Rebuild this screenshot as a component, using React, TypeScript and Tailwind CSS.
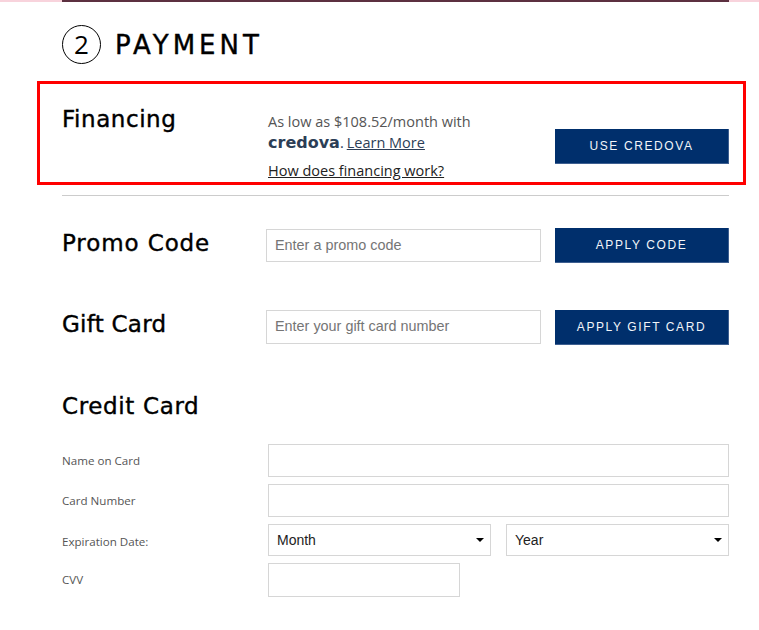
import type { ReactNode } from 'react';

const headingFont = "font-['DejaVu_Sans',sans-serif] [-webkit-text-stroke:0.4px_black]";

function SectionTitle({ children, className }: { children: ReactNode; className: string }) {
    return <h3 className={`w-[204px] shrink-0 text-[23px] leading-[26px] text-black ${headingFont} ${className}`}>{children}</h3>;
}

function NavyButton({ children, className }: { children: ReactNode; className: string }) {
    return (
        <button className={`w-[174px] shrink-0 bg-[#002f6c] text-center text-xs text-[#f2f5f9] tracking-[1.6px] font-['Liberation_Sans',sans-serif] border-r border-b border-[#3e5f90] ${className}`}>
            {children}
        </button>
    );
}

function CardRow({ label, children, className, labelClass = '' }: { label: string; children: ReactNode; className: string; labelClass?: string }) {
    return (
        <div className={`flex items-center ${className}`}>
            <label className={`w-[206px] shrink-0 text-[11.6px] text-[#555] font-['Open_Sans',sans-serif] ${labelClass}`}>{label}</label>
            {children}
        </div>
    );
}

function FakeSelect({ label }: { label: string }) {
    return (
        <div className="flex h-8 w-[223px] items-center justify-between border border-[#d6d6d6] pl-2 pr-[6px] text-sm text-[#222] font-['Liberation_Sans',sans-serif]">
            <span>{label}</span>
            <span className="h-0 w-0 border-x-4 border-t-4 border-x-transparent border-t-black" />
        </div>
    );
}

export default function App() {
    return (
        <div className="h-[630px] w-[759px] overflow-hidden bg-white">
            {/* Top rule */}
            <div className="flex h-0.5">
                <div className="w-[62px] bg-[#f8d3dc]" />
                <div className="flex-1 bg-[#5c3040]" />
                <div className="w-[30px] bg-[#f8d3dc]" />
            </div>

            {/* Payment heading */}
            <div className="ml-[62px] mt-[23px] flex items-center">
                <div className="flex h-[39px] w-[39px] items-center justify-center rounded-full border border-black text-[26px] text-black font-['Open_Sans',sans-serif]">2</div>
                <h2 className={`ml-[14px] h-[39px] text-[26px] leading-[41px] text-black tracking-[4px] ${headingFont}`}>PAYMENT</h2>
            </div>

            {/* Financing */}
            <div className="ml-[37px] mt-[17px] box-border flex h-[104px] w-[709px] border-[3px] border-[#ff0000] pl-[22px] pr-[14px]">
                <div className="mt-[22px]">
                    <SectionTitle className="tracking-[0.55px]">Financing</SectionTitle>
                </div>
                <div className="mt-[28px] w-[289px] shrink-0 pl-[2px] text-[14.5px] text-[#555] font-['Open_Sans',sans-serif]">
                    <p className="leading-[20px]">As low as $108.52/month with</p>
                    <p className="flex items-baseline leading-[22px]">
                        <span className="text-[16px] font-bold text-[#2c3e56] font-['DejaVu_Sans',sans-serif]">credova</span>
                        <span className="text-[#2c3e56]">.</span>
                        <a className="ml-[3px] text-[#2c3e56] underline">Learn More</a>
                    </p>
                    <a className="mt-[7px] block leading-[20px] text-[#222] underline">How does financing work?</a>
                </div>
                <NavyButton className="mt-[45px] h-[35px]">USE CREDOVA</NavyButton>
            </div>

            <div className="ml-[62px] mt-[10px] h-px w-[667px] bg-[#cccccc]" />

            {/* Promo */}
            <div className="ml-[62px] mt-[32px] flex items-start">
                <div className="mt-[2px]"><SectionTitle className="tracking-[0.9px]">Promo Code</SectionTitle></div>
                <input placeholder="Enter a promo code" className="mt-px h-[33px] w-[275px] shrink-0 border border-[#d6d6d6] px-2 pb-[2px] text-[14.4px] text-[#222] placeholder:text-[#757575] font-['Liberation_Sans',sans-serif]" />
                <NavyButton className="ml-[14px] h-[35px]">APPLY CODE</NavyButton>
            </div>

            {/* Gift card */}
            <div className="ml-[62px] mt-[47px] flex items-start">
                <div className="mt-[1px]"><SectionTitle className="tracking-[0.25px]">Gift Card</SectionTitle></div>
                <input placeholder="Enter your gift card number" className="h-[34px] w-[275px] shrink-0 border border-[#d6d6d6] px-2 pb-[2px] text-[14.4px] text-[#222] placeholder:text-[#757575] font-['Liberation_Sans',sans-serif]" />
                <NavyButton className="ml-[14px] h-[35px]">APPLY GIFT CARD</NavyButton>
            </div>

            {/* Credit card */}
            <div className="ml-[62px] mt-[48px]"><SectionTitle className="tracking-[0.64px]">Credit Card</SectionTitle></div>
            <div className="ml-[62px] mt-[25px]">
                <CardRow label="Name on Card" className="h-[33px]">
                    <input className="h-[33px] w-[461px] border border-[#d6d6d6]" />
                </CardRow>
                <CardRow label="Card Number" className="mt-[7px] h-[33px]">
                    <input className="h-[33px] w-[461px] border border-[#d6d6d6]" />
                </CardRow>
                <CardRow label="Expiration Date:" className="mt-[7px] h-8" labelClass="pt-[3px]">
                    <div className="flex gap-[15px]">
                        <FakeSelect label="Month" />
                        <FakeSelect label="Year" />
                    </div>
                </CardRow>
                <CardRow label="CVV" className="mt-[7px] h-[34px]">
                    <input className="h-[34px] w-[192px] border border-[#d6d6d6]" />
                </CardRow>
            </div>
        </div>
    );
}
